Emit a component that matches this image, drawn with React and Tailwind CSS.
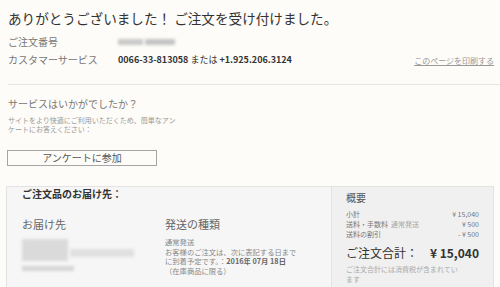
import React from 'react'

function Blur({ className }) {
  return <div className={`blur-[1.5px] ${className}`} />
}

function InfoRow({ label, children, className = '' }) {
  return (
    <div className={`flex items-center ${className}`}>
      <div className="w-[110px] text-[10px] leading-[14px] text-[#777]">{label}</div>
      {children}
    </div>
  )
}

function SummaryLine({ label, extra, value }) {
  return (
    <div className="flex justify-between text-[7px] leading-[10px] text-[#777]">
      <span>
        {label}
        {extra && <span className="ml-[3px] text-[#aaa]">{extra}</span>}
      </span>
      <span>{value}</span>
    </div>
  )
}

export default function App() {
  return (
    <div className="h-[287px] w-[500px] overflow-hidden bg-[#fdfcf8] font-['Noto_Sans_CJK_JP',sans-serif]">
      <div className="pl-2 pt-[9px]">
        <h1 className="text-[13.6px] leading-[18px] text-[#333]">ありがとうございました！ ご注文を受け付けました。</h1>

        <InfoRow label="ご注文番号" className="mt-[8px]">
          <div className="flex gap-[2px]">
            <Blur className="h-[6px] w-[25px] bg-[#c9c9c9]" />
            <Blur className="h-[6px] w-[30px] bg-[#c4c4c4]" />
          </div>
        </InfoRow>

        <InfoRow label="カスタマーサービス" className="mt-[3px] pr-[6px]">
          <div className="text-[9px] leading-[14px] text-[#333]">
            <span className="font-bold">0066-33-813058</span> または <span className="font-bold">+1.925.206.3124</span>
          </div>
          <a className="ml-auto mt-[3px] text-[8px] leading-[12px] text-[#999] underline">このページを印刷する</a>
        </InfoRow>

        <div className="mt-[17px] border-t border-[#e6e5e0]" />

        <h2 className="mt-[12px] text-[10px] leading-[14px] text-[#777]">サービスはいかがでしたか？</h2>
        <p className="mt-[5px] text-[7px] leading-[9px] text-[#999]">
          サイトをより快適にご利用いただくため、簡単なアン
          <br />
          ケートにお答えください：
        </p>

        <button
          type="button"
          className="-ml-px mt-[16px] h-[16px] w-[150px] border border-[#a5a5a5] bg-[#fdfcf8] text-[10px] leading-[14px] text-[#555]"
        >
          アンケートに参加
        </button>
      </div>

      <div className="ml-[6px] mt-[19px] flex h-[120px] w-[488px] border border-[#e3e3e3] bg-[#f6f6f6]">
        <div className="flex-1 pl-[15px]">
          <h3 className="text-[10px] font-bold leading-[14px] text-[#333]">ご注文品のお届け先：</h3>
          <div className="mt-[16px] flex">
            <div className="w-[143px]">
              <div className="text-[11px] leading-[15px] text-[#666]">お届け先</div>
              <div className="mt-[7px] flex flex-col">
                <div className="flex items-start gap-[2px]">
                  <Blur className="h-[22px] w-[46px] bg-[#dadada]" />
                  <Blur className="mt-[10px] h-[8px] w-[64px] bg-[#e0e0e0]" />
                </div>
                <Blur className="mt-[5px] h-[5px] w-[52px] bg-[#d6d6d6]" />
              </div>
            </div>
            <div className="flex-1">
              <div className="text-[11px] leading-[15px] text-[#666]">発送の種類</div>
              <div className="mt-[6px] text-[7.3px] leading-[9.5px] text-[#888]">
                <div>通常発送</div>
                <div>お客様のご注文は、次に表記する日まで</div>
                <div>
                  に到着予定です。：<span className="font-bold text-[#666]">2016年 07月 18日</span>
                </div>
                <div>（在庫商品に限る）</div>
              </div>
            </div>
          </div>
        </div>

        <div className="w-[162px] border-l border-[#e3e3e3] bg-[#f0f0f0] px-[14px] pt-[4px]">
          <h3 className="text-[10px] leading-[14px] text-[#555]">概要</h3>
          <div className="mt-[4px]">
            <SummaryLine label="小計" value="¥ 15,040" />
            <SummaryLine label="送料・手数料" extra="通常発送" value="¥ 500" />
            <SummaryLine label="送料の割引" value="- ¥ 500" />
          </div>
          <div className="mt-[6px] flex items-center justify-between text-[12px] leading-[16px] text-[#333]">
            <span>ご注文合計：</span>
            <span className="font-bold">¥ 15,040</span>
          </div>
          <p className="mt-[3px] w-[120px] text-[7px] leading-[10px] text-[#aaa]">
            ご注文合計には消費税が含まれてい
            <br />
            ます
          </p>
        </div>
      </div>
    </div>
  )
}
